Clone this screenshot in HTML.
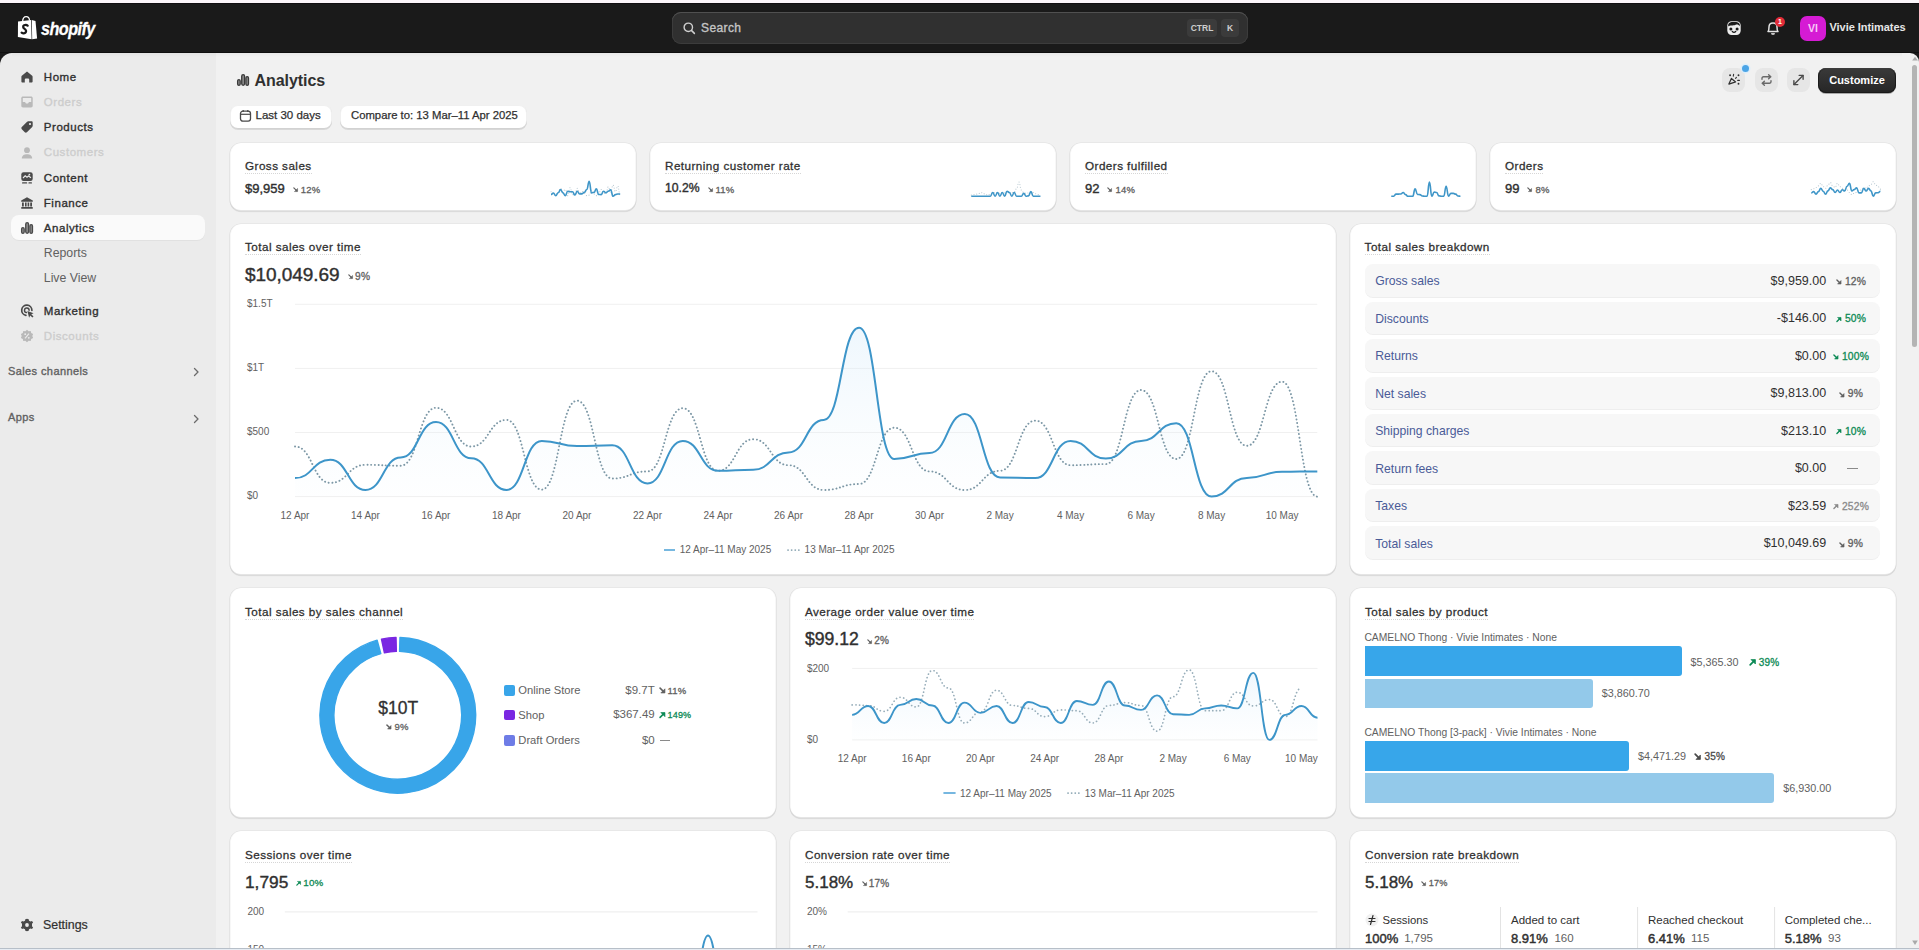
<!DOCTYPE html>
<html><head><meta charset="utf-8"><style>
*{box-sizing:border-box;margin:0;padding:0}
html,body{width:1919px;height:950px;overflow:hidden;background:#f1f1f1;font-family:"Liberation Sans",sans-serif;color:#303030}
.abs{position:absolute}
.t{position:absolute;white-space:nowrap}
.card{position:absolute;background:#fff;border-radius:11px;box-shadow:0 0 0 0.6px rgba(0,0,0,.07),0 1px 0 0.3px rgba(0,0,0,.05),inset 0 -1px 0 rgba(0,0,0,.1),inset 1px 0 0 rgba(0,0,0,.03),inset -1px 0 0 rgba(0,0,0,.03)}
.ul{border-bottom:1px dashed #d4d4d4;}
</style></head><body>
<div class="abs" style="left:0px;top:0px;width:1919px;height:3px;background:#fbf6fa;border-radius:0px;"></div>
<div class="abs" style="left:0px;top:3px;width:1919px;height:80px;background:#1a1a1a;border-radius:0px;"></div>
<div class="abs" style="left:0px;top:3px;width:1919px;height:1px;background:#110e11;border-radius:0px;"></div>
<div class="abs" style="left:216px;top:53px;width:1694px;height:897px;background:#f1f1f1;border-radius:0px;"></div>
<div class="abs" style="left:0px;top:53px;width:216px;height:897px;background:#ebebeb;border-radius:0px;border-top-left-radius:12px"></div>
<div class="abs" style="left:0px;top:52px;width:1919px;height:1px;background:#0f0f0f;border-radius:0px;"></div>
<div class="abs" style="left:12px;top:53px;width:1890px;height:4px;background:linear-gradient(rgba(0,0,0,.035),rgba(0,0,0,0));border-radius:0px;"></div>
<div class="abs" style="left:1910px;top:53px;width:9px;height:897px;background:#f1f1f1;border-radius:0px;border-top-right-radius:10px"></div>
<svg class="abs" style="left:17px;top:16px;" width="22" height="24" viewBox="0 0 22 24">
<path d="M1 5.6 L14.1 4 L14.6 23.3 L0.9 21.1 Z" fill="#fff"/>
<path d="M14.8 4.1 L18.5 5 L20.1 22.6 L15.2 23.3 Z" fill="#fff"/>
<path d="M5.6 5.6 C5.8 2.4 7.4 0.7 9.2 0.7 C11 0.7 12.3 2.2 12.6 4.6" stroke="#fff" stroke-width="1.3" fill="none"/>
<path d="M10.7 9.7 C9.9 8.8 8.3 8.6 7.1 9.2 C5.7 9.9 5.9 11.7 7.3 12.6 C8.9 13.6 9.5 14.9 8.7 16.4 C7.9 17.7 5.9 17.7 4.6 16.7" stroke="#1a1a1a" stroke-width="2.2" fill="none" stroke-linecap="round"/>
</svg>
<div class="t " style="top:18.51px;font-size:18px;line-height:21.6px;font-weight:700;color:#fff;left:40.5px;font-style:italic;letter-spacing:-0.6px;transform:scaleX(0.9);transform-origin:left center;-webkit-text-stroke:0.3px #fff;">shopify</div>
<div class="abs" style="left:672px;top:12px;width:576px;height:32px;background:#303030;border-radius:9px;box-shadow:inset 0 1px 0 #505050,inset 0 0 0 1px #3c3c3c"></div>
<svg class="abs" style="left:683px;top:22px;" width="13" height="13" viewBox="0 0 13 13"><circle cx="5.3" cy="5.3" r="4.2" stroke="#cfcfcf" stroke-width="1.4" fill="none"/><path d="M8.4 8.4 L11.4 11.4" stroke="#cfcfcf" stroke-width="1.5" stroke-linecap="round"/></svg>
<div class="t " style="top:21.24px;font-size:12px;line-height:14.4px;font-weight:400;color:#c4c4c4;-webkit-text-stroke:0.35px #c4c4c4;letter-spacing:0.4px;left:701px;">Search</div>
<div class="abs" style="left:1187px;top:19px;width:30px;height:18px;background:#3b3b3b;border-radius:4px;"></div>
<div class="t " style="top:23.00px;font-size:8.5px;line-height:10.2px;font-weight:700;color:#cdcdcd;left:1202px;transform:translateX(-50%);">CTRL</div>
<div class="abs" style="left:1221px;top:19px;width:18px;height:18px;background:#3b3b3b;border-radius:4px;"></div>
<div class="t " style="top:23.00px;font-size:8.5px;line-height:10.2px;font-weight:700;color:#cdcdcd;left:1230px;transform:translateX(-50%);">K</div>
<svg class="abs" style="left:1727px;top:21px;" width="14" height="14" viewBox="0 0 14 14"><rect x="0.3" y="0.3" width="13.4" height="13.6" rx="4.2" fill="#ededed"/>
<path d="M1.2 5.6 C3 3.6 6 4.8 8.2 3.9 C10 3.2 11.6 3.6 12.8 5.2 V3.6 C12 1.6 10.6 1 7 1 C3.4 1 2 1.6 1.2 3.6 Z" fill="#1a1a1a"/>
<circle cx="3.9" cy="7.9" r="1.5" fill="#1a1a1a"/><circle cx="10.1" cy="7.9" r="1.5" fill="#1a1a1a"/>
<path d="M5.3 10.5 Q7 12.2 8.7 10.5" stroke="#1a1a1a" stroke-width="1.3" fill="none" stroke-linecap="round"/></svg>
<svg class="abs" style="left:1765px;top:20px;" width="16" height="16" viewBox="0 0 16 16"><path d="M3 11.5 C4 10.5 4 9 4 7 C4 4.5 5.5 3 8 3 C10.5 3 12 4.5 12 7 C12 9 12 10.5 13 11.5 Z" stroke="#e3e3e3" stroke-width="1.5" fill="none" stroke-linejoin="round"/>
<path d="M6.5 13.2 Q8 15 9.5 13.2" stroke="#e3e3e3" stroke-width="1.5" fill="none"/></svg>
<div class="abs" style="left:1775px;top:17px;width:10px;height:10px;border-radius:5px;background:#e22c38"></div>
<div class="t " style="top:17.88px;font-size:7px;line-height:8.4px;font-weight:700;color:#fff;left:1780px;transform:translateX(-50%);">1</div>
<div class="abs" style="left:1800px;top:16px;width:26px;height:25px;background:#d51bd4;border-radius:7px;"></div>
<div class="t " style="top:21.82px;font-size:10.5px;line-height:12.6px;font-weight:700;color:#f7c9f7;left:1813px;transform:translateX(-50%);">VI</div>
<div class="t " style="top:20.73px;font-size:11px;line-height:13.2px;font-weight:700;color:#e6e6e6;left:1829.5px;letter-spacing:-0.05px">Vivie Intimates</div>
<div class="abs" style="left:11px;top:215px;width:194px;height:25px;background:#fafafa;border-radius:8px;box-shadow:0 1px 0 rgba(0,0,0,.04)"></div>
<div class="t " style="top:70.83px;font-size:11.5px;line-height:13.8px;font-weight:400;color:#303030;-webkit-text-stroke:0.35px #303030;letter-spacing:0.4px;left:43.8px;letter-spacing:0.55px;-webkit-text-stroke:0.35px #303030;">Home</div>
<svg class="abs" style="left:20px;top:70px;" width="14" height="14" viewBox="0 0 14 14"><path d="M7 1.6 L12.2 5.8 C12.5 6.1 12.6 6.4 12.6 6.8 V11.4 C12.6 12 12.1 12.5 11.5 12.5 H9.2 V9.6 C9.2 8.9 8.6 8.4 7.9 8.4 H6.1 C5.4 8.4 4.8 8.9 4.8 9.6 V12.5 H2.5 C1.9 12.5 1.4 12 1.4 11.4 V6.8 C1.4 6.4 1.5 6.1 1.8 5.8 Z" fill="#4a4a4a"/></svg>
<div class="t " style="top:96.13px;font-size:11.5px;line-height:13.8px;font-weight:400;color:#cdcdcd;-webkit-text-stroke:0.35px #cdcdcd;letter-spacing:0.4px;left:43.8px;letter-spacing:0.55px;-webkit-text-stroke:0.35px #cdcdcd;">Orders</div>
<svg class="abs" style="left:20px;top:95.3px;" width="14" height="14" viewBox="0 0 14 14"><path d="M3 1.5 H11 C12 1.5 12.7 2.2 12.7 3.2 V10.8 C12.7 11.8 12 12.5 11 12.5 H3 C2 12.5 1.3 11.8 1.3 10.8 V3.2 C1.3 2.2 2 1.5 3 1.5 Z" fill="#b9b9b9"/><path d="M2.8 3 H11.2 V7 H9 L8 8.5 H6 L5 7 H2.8 Z" fill="#ebebeb"/></svg>
<div class="t " style="top:121.03px;font-size:11.5px;line-height:13.8px;font-weight:400;color:#303030;-webkit-text-stroke:0.35px #303030;letter-spacing:0.4px;left:43.8px;letter-spacing:0.55px;-webkit-text-stroke:0.35px #303030;">Products</div>
<svg class="abs" style="left:20px;top:120.2px;" width="14" height="14" viewBox="0 0 14 14"><path d="M8.2 1.3 H11.6 C12.2 1.3 12.7 1.8 12.7 2.4 V5.8 C12.7 6.2 12.5 6.6 12.2 6.9 L6.9 12.2 C6.3 12.8 5.4 12.8 4.8 12.2 L1.8 9.2 C1.2 8.6 1.2 7.7 1.8 7.1 L7.1 1.8 C7.4 1.5 7.8 1.3 8.2 1.3 Z" fill="#4a4a4a"/><circle cx="10" cy="4" r="1.1" fill="#ebebeb"/></svg>
<div class="t " style="top:146.33px;font-size:11.5px;line-height:13.8px;font-weight:400;color:#cdcdcd;-webkit-text-stroke:0.35px #cdcdcd;letter-spacing:0.4px;left:43.8px;letter-spacing:0.55px;-webkit-text-stroke:0.35px #cdcdcd;">Customers</div>
<svg class="abs" style="left:20px;top:145.5px;" width="14" height="14" viewBox="0 0 14 14"><circle cx="7" cy="4.2" r="2.9" fill="#b9b9b9"/><path d="M1.8 12.6 C1.8 9.6 4 8.2 7 8.2 C10 8.2 12.2 9.6 12.2 12.6 Z" fill="#b9b9b9"/></svg>
<div class="t " style="top:171.83px;font-size:11.5px;line-height:13.8px;font-weight:400;color:#303030;-webkit-text-stroke:0.35px #303030;letter-spacing:0.4px;left:43.8px;letter-spacing:0.55px;-webkit-text-stroke:0.35px #303030;">Content</div>
<svg class="abs" style="left:20px;top:171px;" width="14" height="14" viewBox="0 0 14 14"><rect x="1.3" y="1.3" width="11.4" height="8.6" rx="2.2" fill="#4a4a4a"/><path d="M3 7 L5.2 4.8 L7 6.2 L8.5 5 L11 6.8" stroke="#ebebeb" stroke-width="1.1" fill="none"/><circle cx="9.4" cy="3.6" r="0.9" fill="#ebebeb"/><rect x="2" y="11.3" width="5.2" height="1.3" rx=".6" fill="#4a4a4a"/><rect x="8.4" y="11.3" width="3.6" height="1.3" rx=".6" fill="#4a4a4a"/></svg>
<div class="t " style="top:196.83px;font-size:11.5px;line-height:13.8px;font-weight:400;color:#303030;-webkit-text-stroke:0.35px #303030;letter-spacing:0.4px;left:43.8px;letter-spacing:0.55px;-webkit-text-stroke:0.35px #303030;">Finance</div>
<svg class="abs" style="left:20px;top:196px;" width="14" height="14" viewBox="0 0 14 14"><path d="M7 1.3 L12.8 4.6 V5.8 H1.2 V4.6 Z" fill="#4a4a4a"/><rect x="2" y="6.5" width="1.8" height="4" fill="#4a4a4a"/><rect x="5" y="6.5" width="1.6" height="4" fill="#4a4a4a"/><rect x="7.6" y="6.5" width="1.6" height="4" fill="#4a4a4a"/><rect x="10.2" y="6.5" width="1.8" height="4" fill="#4a4a4a"/><rect x="1.2" y="11" width="11.6" height="1.8" rx=".5" fill="#4a4a4a"/></svg>
<div class="t " style="top:222.03px;font-size:11.5px;line-height:13.8px;font-weight:400;color:#303030;-webkit-text-stroke:0.35px #303030;letter-spacing:0.4px;left:43.8px;letter-spacing:0.55px;-webkit-text-stroke:0.35px #303030;">Analytics</div>
<svg class="abs" style="left:20px;top:221.2px;" width="14" height="14" viewBox="0 0 14 14"><rect x="1.6" y="6.7" width="2.6" height="5.6" rx="1.3" fill="#8a8a8a" stroke="#4a4a4a" stroke-width="1.25"/><rect x="5.7" y="1.7" width="2.9" height="10.6" rx="1.45" fill="#8a8a8a" stroke="#4a4a4a" stroke-width="1.25"/><rect x="9.9" y="3.6" width="2.6" height="8.7" rx="1.3" fill="#8a8a8a" stroke="#4a4a4a" stroke-width="1.25"/></svg>
<div class="t " style="top:246.36px;font-size:12.3px;line-height:14.76px;font-weight:400;color:#616161;left:43.8px;">Reports</div>
<div class="t " style="top:271.36px;font-size:12.3px;line-height:14.76px;font-weight:400;color:#616161;left:43.8px;">Live View</div>
<div class="t " style="top:304.93px;font-size:11.5px;line-height:13.8px;font-weight:400;color:#303030;-webkit-text-stroke:0.35px #303030;letter-spacing:0.4px;left:43.8px;letter-spacing:0.55px;-webkit-text-stroke:0.35px #303030;">Marketing</div>
<svg class="abs" style="left:20px;top:304.1px;" width="14" height="14" viewBox="0 0 14 14"><path d="M5.91 11.32 A5.1 5.1 0 1 1 11.90 6.30" stroke="#4a4a4a" stroke-width="1.7" fill="none" stroke-linecap="round"/><path d="M6.40 8.57 A2.3 2.3 0 1 1 9.10 6.30" stroke="#4a4a4a" stroke-width="1.5" fill="none" stroke-linecap="round"/><path d="M7.4 7 L13.6 9.2 L11.3 10.3 L13.5 12.5 L12.4 13.6 L10.2 11.4 L9.1 13.7 Z" fill="#4a4a4a"/></svg>
<div class="t " style="top:330.23px;font-size:11.5px;line-height:13.8px;font-weight:400;color:#cdcdcd;-webkit-text-stroke:0.35px #cdcdcd;letter-spacing:0.4px;left:43.8px;letter-spacing:0.55px;-webkit-text-stroke:0.35px #cdcdcd;">Discounts</div>
<svg class="abs" style="left:20px;top:329.4px;" width="14" height="14" viewBox="0 0 14 14"><path d="M7 0.8 L8.6 2.2 L10.7 1.9 L11.2 4 L13.1 5 L12.3 7 L13.1 9 L11.2 10 L10.7 12.1 L8.6 11.8 L7 13.2 L5.4 11.8 L3.3 12.1 L2.8 10 L0.9 9 L1.7 7 L0.9 5 L2.8 4 L3.3 1.9 L5.4 2.2 Z" fill="#b9b9b9"/><path d="M5 9.3 L9 4.7" stroke="#ebebeb" stroke-width="1.1"/><circle cx="5.2" cy="5.2" r=".9" fill="#ebebeb"/><circle cx="8.8" cy="8.8" r=".9" fill="#ebebeb"/></svg>
<div class="t " style="top:364.83px;font-size:11px;line-height:13.2px;font-weight:400;color:#616161;-webkit-text-stroke:0.35px #616161;letter-spacing:0.4px;left:8px;">Sales channels</div>
<div class="t " style="top:411.13px;font-size:11px;line-height:13.2px;font-weight:400;color:#616161;-webkit-text-stroke:0.35px #616161;letter-spacing:0.4px;left:8px;">Apps</div>
<svg class="abs" style="left:192px;top:367.3px;" width="8" height="10" viewBox="0 0 8 10"><path d="M2.5 1.5 L6 5 L2.5 8.5" stroke="#6b6b6b" stroke-width="1.3" fill="none" stroke-linecap="round" stroke-linejoin="round"/></svg>
<svg class="abs" style="left:192px;top:414.1px;" width="8" height="10" viewBox="0 0 8 10"><path d="M2.5 1.5 L6 5 L2.5 8.5" stroke="#6b6b6b" stroke-width="1.3" fill="none" stroke-linecap="round" stroke-linejoin="round"/></svg>
<svg class="abs" style="left:20px;top:917.5px;" width="14" height="14" viewBox="0 0 14 14"><path d="M7 0.7 L8.7 1.2 L9 2.8 L10.5 3.5 L12 2.9 L13.1 4.5 L12 5.7 V8.3 L13.1 9.5 L12 11.1 L10.5 10.5 L9 11.2 L8.7 12.8 L7 13.3 L5.3 12.8 L5 11.2 L3.5 10.5 L2 11.1 L0.9 9.5 L2 8.3 V5.7 L0.9 4.5 L2 2.9 L3.5 3.5 L5 2.8 L5.3 1.2 Z" fill="#4a4a4a"/><circle cx="7" cy="7" r="1.9" fill="#ebebeb"/></svg>
<div class="t " style="top:917.70px;font-size:12.4px;line-height:14.88px;font-weight:400;color:#303030;left:43px;-webkit-text-stroke:0.2px #303030">Settings</div>
<svg class="abs" style="left:236px;top:73px;" width="14" height="14" viewBox="0 0 14 14"><rect x="1.6" y="6.7" width="2.6" height="5.6" rx="1.3" fill="#8a8a8a" stroke="#3a3a3a" stroke-width="1.25"/><rect x="5.7" y="1.7" width="2.9" height="10.6" rx="1.45" fill="#8a8a8a" stroke="#3a3a3a" stroke-width="1.25"/><rect x="9.9" y="3.6" width="2.6" height="8.7" rx="1.3" fill="#8a8a8a" stroke="#3a3a3a" stroke-width="1.25"/></svg>
<div class="t " style="top:70.58px;font-size:16px;line-height:19.2px;font-weight:700;color:#303030;left:254.5px;letter-spacing:-0.05px">Analytics</div>
<div class="abs" style="left:230px;top:105px;width:102px;height:23.5px;background:#fff;border-radius:8px;box-shadow:0 1px 0 rgba(0,0,0,.1),inset 0 -1px 0 rgba(0,0,0,.12),inset 0 0 0 1px rgba(0,0,0,.06)"></div>
<svg class="abs" style="left:239px;top:109px;" width="13" height="14" viewBox="0 0 13 14"><rect x="1.5" y="2.2" width="10" height="10" rx="2.4" stroke="#4a4a4a" stroke-width="1.3" fill="none"/><path d="M1.8 5.3 H11.2" stroke="#4a4a4a" stroke-width="1.2"/><path d="M4.2 1 V3 M8.8 1 V3" stroke="#4a4a4a" stroke-width="1.2"/></svg>
<div class="t " style="top:108.73px;font-size:11.5px;line-height:13.8px;font-weight:400;color:#303030;left:255.5px;letter-spacing:0px;-webkit-text-stroke:0.25px #303030">Last 30 days</div>
<div class="abs" style="left:340px;top:105px;width:187px;height:23.5px;background:#fff;border-radius:8px;box-shadow:0 1px 0 rgba(0,0,0,.1),inset 0 -1px 0 rgba(0,0,0,.12),inset 0 0 0 1px rgba(0,0,0,.06)"></div>
<div class="t " style="top:108.85px;font-size:11.3px;line-height:13.56px;font-weight:400;color:#303030;left:351px;-webkit-text-stroke:0.25px #303030">Compare to: 13 Mar–11 Apr 2025</div>
<div class="abs" style="left:1722px;top:68px;width:23px;height:23.5px;background:#e6e6e6;border-radius:8px;"></div>
<div class="abs" style="left:1755px;top:68px;width:23px;height:23.5px;background:#e6e6e6;border-radius:8px;"></div>
<div class="abs" style="left:1787px;top:68px;width:23px;height:23.5px;background:#e6e6e6;border-radius:8px;"></div>
<svg class="abs" style="left:1727px;top:73px;" width="14" height="14" viewBox="0 0 14 14"><path d="M1.9 11.1 L4.4 5.4 L8.6 8.9 Z" stroke="#303030" stroke-width="1.25" fill="none" stroke-linejoin="round"/>
<circle cx="3.1" cy="2.3" r="0.95" fill="#303030"/><circle cx="11.5" cy="2.3" r="0.95" fill="#303030"/><circle cx="11.5" cy="10.7" r="0.95" fill="#303030"/>
<path d="M6.6 1.3 L6.3 3.1 M9.4 4.4 L8.6 5.4 M10.7 7.4 H12.4" stroke="#303030" stroke-width="1.1" stroke-linecap="round"/></svg>
<div class="abs" style="left:1742px;top:65px;width:7px;height:7px;border-radius:4px;background:#4ba4e6;box-shadow:0 0 0 1.5px #dceefb"></div>
<svg class="abs" style="left:1759px;top:73px;" width="15" height="14" viewBox="0 0 15 14"><path d="M3 6.2 V5.2 C3 4.4 3.6 3.8 4.4 3.8 H11.5 M9.6 1.8 L11.8 3.8 L9.6 5.8" stroke="#6a6a6a" stroke-width="1.4" fill="none" stroke-linecap="round" stroke-linejoin="round"/>
<path d="M12 7.8 V8.8 C12 9.6 11.4 10.2 10.6 10.2 H3.5 M5.4 8.2 L3.2 10.2 L5.4 12.2" stroke="#6a6a6a" stroke-width="1.4" fill="none" stroke-linecap="round" stroke-linejoin="round"/></svg>
<svg class="abs" style="left:1791px;top:73px;" width="15" height="14" viewBox="0 0 15 14"><path d="M3 11.5 L12 2.5" stroke="#4a4a4a" stroke-width="1.4" stroke-linecap="round"/>
<path d="M8.2 2.4 H12.1 V6.3 M2.9 7.7 V11.6 H6.8" stroke="#4a4a4a" stroke-width="1.4" fill="none" stroke-linecap="round" stroke-linejoin="round"/></svg>
<div class="abs" style="left:1818px;top:68px;width:78px;height:24.5px;background:linear-gradient(#3a3a3a,#262626);border-radius:8px;box-shadow:0 1px 0 rgba(0,0,0,.3),inset 0 1px 0 rgba(255,255,255,.15),inset 0 0 0 1px #1a1a1a"></div>
<div class="t " style="top:73.53px;font-size:11px;line-height:13.2px;font-weight:700;color:#fff;left:1857px;transform:translateX(-50%);">Customize</div>
<div class="card" style="left:230px;top:143px;width:406px;height:67.5px"></div>
<div class="t " style="top:158.81px;font-size:11.7px;line-height:14.04px;font-weight:400;color:#303030;-webkit-text-stroke:0.35px #303030;letter-spacing:0.4px;left:245px;border-bottom:1px dotted #d6d6d6;letter-spacing:0.45px;-webkit-text-stroke:0.28px #303030;">Gross sales</div>
<div class="abs" style="left:245px;top:178.6px;height:20px;display:flex;align-items:center;white-space:nowrap"><span style="display:inline-flex;align-items:center;line-height:1;font-size:13px;font-weight:400;color:#303030;-webkit-text-stroke:0.4px #303030;margin-right:8px;">$9,959</span><span style="display:inline-flex;align-items:center;line-height:1;margin-right:3px;position:relative;top:1px;"><svg width="5" height="5" viewBox="0 0 6 6" style="display:block;overflow:visible"><path d="M1 1 L4.6 4.6" stroke="#616161" stroke-width="1.5" fill="none" stroke-linecap="round"/><path d="M5.5 1.7 V5.5 H1.7 Z" fill="#616161" stroke="#616161" stroke-width="0.6" stroke-linejoin="round"/></svg></span><span style="display:inline-flex;align-items:center;line-height:1;font-size:9.5px;font-weight:400;color:#616161;-webkit-text-stroke:0.3px #616161;letter-spacing:0.2px;position:relative;top:1px;">12%</span></div>
<div class="card" style="left:650px;top:143px;width:406px;height:67.5px"></div>
<div class="t " style="top:158.81px;font-size:11.7px;line-height:14.04px;font-weight:400;color:#303030;-webkit-text-stroke:0.35px #303030;letter-spacing:0.4px;left:665px;border-bottom:1px dotted #d6d6d6;letter-spacing:0.45px;-webkit-text-stroke:0.28px #303030;">Returning customer rate</div>
<div class="abs" style="left:665px;top:178.6px;height:20px;display:flex;align-items:center;white-space:nowrap"><span style="display:inline-flex;align-items:center;line-height:1;font-size:12.2px;font-weight:400;color:#303030;-webkit-text-stroke:0.4px #303030;margin-right:8px;">10.2%</span><span style="display:inline-flex;align-items:center;line-height:1;margin-right:3px;position:relative;top:1px;"><svg width="5" height="5" viewBox="0 0 6 6" style="display:block;overflow:visible"><path d="M1 1 L4.6 4.6" stroke="#616161" stroke-width="1.5" fill="none" stroke-linecap="round"/><path d="M5.5 1.7 V5.5 H1.7 Z" fill="#616161" stroke="#616161" stroke-width="0.6" stroke-linejoin="round"/></svg></span><span style="display:inline-flex;align-items:center;line-height:1;font-size:9.5px;font-weight:400;color:#616161;-webkit-text-stroke:0.3px #616161;letter-spacing:0.2px;position:relative;top:1px;">11%</span></div>
<div class="card" style="left:1070px;top:143px;width:406px;height:67.5px"></div>
<div class="t " style="top:158.81px;font-size:11.7px;line-height:14.04px;font-weight:400;color:#303030;-webkit-text-stroke:0.35px #303030;letter-spacing:0.4px;left:1085px;border-bottom:1px dotted #d6d6d6;letter-spacing:0.45px;-webkit-text-stroke:0.28px #303030;">Orders fulfilled</div>
<div class="abs" style="left:1085px;top:178.6px;height:20px;display:flex;align-items:center;white-space:nowrap"><span style="display:inline-flex;align-items:center;line-height:1;font-size:13px;font-weight:400;color:#303030;-webkit-text-stroke:0.4px #303030;margin-right:8px;">92</span><span style="display:inline-flex;align-items:center;line-height:1;margin-right:3px;position:relative;top:1px;"><svg width="5" height="5" viewBox="0 0 6 6" style="display:block;overflow:visible"><path d="M1 1 L4.6 4.6" stroke="#616161" stroke-width="1.5" fill="none" stroke-linecap="round"/><path d="M5.5 1.7 V5.5 H1.7 Z" fill="#616161" stroke="#616161" stroke-width="0.6" stroke-linejoin="round"/></svg></span><span style="display:inline-flex;align-items:center;line-height:1;font-size:9.5px;font-weight:400;color:#616161;-webkit-text-stroke:0.3px #616161;letter-spacing:0.2px;position:relative;top:1px;">14%</span></div>
<div class="card" style="left:1490px;top:143px;width:406px;height:67.5px"></div>
<div class="t " style="top:158.81px;font-size:11.7px;line-height:14.04px;font-weight:400;color:#303030;-webkit-text-stroke:0.35px #303030;letter-spacing:0.4px;left:1505px;border-bottom:1px dotted #d6d6d6;letter-spacing:0.45px;-webkit-text-stroke:0.28px #303030;">Orders</div>
<div class="abs" style="left:1505px;top:178.6px;height:20px;display:flex;align-items:center;white-space:nowrap"><span style="display:inline-flex;align-items:center;line-height:1;font-size:13px;font-weight:400;color:#303030;-webkit-text-stroke:0.4px #303030;margin-right:8px;">99</span><span style="display:inline-flex;align-items:center;line-height:1;margin-right:3px;position:relative;top:1px;"><svg width="5" height="5" viewBox="0 0 6 6" style="display:block;overflow:visible"><path d="M1 1 L4.6 4.6" stroke="#616161" stroke-width="1.5" fill="none" stroke-linecap="round"/><path d="M5.5 1.7 V5.5 H1.7 Z" fill="#616161" stroke="#616161" stroke-width="0.6" stroke-linejoin="round"/></svg></span><span style="display:inline-flex;align-items:center;line-height:1;font-size:9.5px;font-weight:400;color:#616161;-webkit-text-stroke:0.3px #616161;letter-spacing:0.2px;position:relative;top:1px;">8%</span></div>
<div class="card" style="left:230px;top:224px;width:1106px;height:350.5px"></div>
<div class="t " style="top:239.61px;font-size:11.7px;line-height:14.04px;font-weight:400;color:#303030;-webkit-text-stroke:0.35px #303030;letter-spacing:0.4px;left:245px;border-bottom:1px dotted #d6d6d6;letter-spacing:0.45px;-webkit-text-stroke:0.28px #303030;">Total sales over time</div>
<div class="abs" style="left:245px;top:264.4px;height:20px;display:flex;align-items:center;white-space:nowrap"><span style="display:inline-flex;align-items:center;line-height:1;font-size:19px;font-weight:400;color:#303030;-webkit-text-stroke:0.4px #303030;margin-right:8px;letter-spacing:-0.05px">$10,049.69</span><span style="display:inline-flex;align-items:center;line-height:1;margin-right:2.5px;position:relative;top:2.5px;"><svg width="5" height="5" viewBox="0 0 6 6" style="display:block;overflow:visible"><path d="M1 1 L4.6 4.6" stroke="#616161" stroke-width="1.5" fill="none" stroke-linecap="round"/><path d="M5.5 1.7 V5.5 H1.7 Z" fill="#616161" stroke="#616161" stroke-width="0.6" stroke-linejoin="round"/></svg></span><span style="display:inline-flex;align-items:center;line-height:1;font-size:10.2px;font-weight:400;color:#616161;-webkit-text-stroke:0.3px #616161;letter-spacing:0.2px;position:relative;top:2.5px;">9%</span></div>
<svg class="abs" style="left:0;top:0" width="1919" height="950"><path d="M551.00 191.79 C552.19 191.79 552.19 195.03 553.39 195.03 C554.58 195.03 554.58 193.42 555.77 193.42 C556.97 193.42 556.97 193.50 558.16 193.50 C559.35 193.50 559.35 188.36 560.54 188.36 C561.74 188.36 561.74 191.79 562.93 191.79 C564.12 191.79 564.12 189.43 565.32 189.43 C566.51 189.43 566.51 195.62 567.70 195.62 C568.90 195.62 568.90 187.73 570.09 187.73 C571.28 187.73 571.28 194.63 572.48 194.63 C573.67 194.63 573.67 194.00 574.86 194.00 C576.06 194.00 576.06 188.39 577.25 188.39 C578.44 188.39 578.44 193.95 579.63 193.95 C580.83 193.95 580.83 191.15 582.02 191.15 C583.21 191.15 583.21 193.45 584.41 193.45 C585.60 193.45 585.60 195.66 586.79 195.66 C587.99 195.66 587.99 195.12 589.18 195.12 C590.37 195.12 590.37 190.13 591.57 190.13 C592.76 190.13 592.76 194.00 593.95 194.00 C595.14 194.00 595.14 195.66 596.34 195.66 C597.53 195.66 597.53 193.95 598.72 193.95 C599.92 193.95 599.92 189.50 601.11 189.50 C602.30 189.50 602.30 193.45 603.50 193.45 C604.69 193.45 604.69 193.36 605.88 193.36 C607.08 193.36 607.08 186.78 608.27 186.78 C609.46 186.78 609.46 192.90 610.66 192.90 C611.85 192.90 611.85 185.12 613.04 185.12 C614.23 185.12 614.23 191.73 615.43 191.73 C616.62 191.73 616.62 186.04 617.81 186.04 C619.01 186.04 619.01 196.24 620.20 196.24" stroke="#b9c9d2" stroke-width="1.1" stroke-dasharray="0.1 2.6" stroke-linecap="round" fill="none"/><path d="M551.00 194.60 C552.19 194.60 552.19 192.97 553.39 192.97 C554.58 192.97 554.58 195.66 555.77 195.66 C556.97 195.66 556.97 192.77 558.16 192.77 C559.35 192.77 559.35 189.63 560.54 189.63 C561.74 189.63 561.74 192.83 562.93 192.83 C564.12 192.83 564.12 195.66 565.32 195.66 C566.51 195.66 566.51 191.30 567.70 191.30 C568.90 191.30 568.90 191.75 570.09 191.75 C571.28 191.75 571.28 191.69 572.48 191.69 C573.67 191.69 573.67 195.07 574.86 195.07 C576.06 195.07 576.06 191.30 577.25 191.30 C578.44 191.30 578.44 193.95 579.63 193.95 C580.83 193.95 580.83 193.85 582.02 193.85 C583.21 193.85 583.21 192.32 584.41 192.32 C585.60 192.32 585.60 189.43 586.79 189.43 C587.99 189.43 587.99 181.25 589.18 181.25 C590.37 181.25 590.37 192.90 591.57 192.90 C592.76 192.90 592.76 192.38 593.95 192.38 C595.14 192.38 595.14 188.91 596.34 188.91 C597.53 188.91 597.53 194.54 598.72 194.54 C599.92 194.54 599.92 194.60 601.11 194.60 C602.30 194.60 602.30 191.30 603.50 191.30 C604.69 191.30 604.69 192.87 605.88 192.87 C607.08 192.87 607.08 191.30 608.27 191.30 C609.46 191.30 609.46 189.73 610.66 189.73 C611.85 189.73 611.85 196.24 613.04 196.24 C614.23 196.24 614.23 194.59 615.43 194.59 C616.62 194.59 616.62 194.04 617.81 194.04 C619.01 194.04 619.01 194.00 620.20 194.00" stroke="#3f96c8" stroke-width="1.6" fill="none" stroke-linejoin="round"/></svg>
<svg class="abs" style="left:0;top:0" width="1919" height="950"><path d="M971.25 195.00 C972.44 195.00 972.44 194.58 973.64 194.58 C974.83 194.58 974.83 194.17 976.02 194.17 C977.22 194.17 977.22 193.75 978.41 193.75 C979.60 193.75 979.60 192.50 980.79 192.50 C981.99 192.50 981.99 193.33 983.18 193.33 C984.37 193.33 984.37 194.58 985.57 194.58 C986.76 194.58 986.76 195.00 987.95 195.00 C989.15 195.00 989.15 194.17 990.34 194.17 C991.53 194.17 991.53 193.33 992.73 193.33 C993.92 193.33 993.92 192.50 995.11 192.50 C996.31 192.50 996.31 192.92 997.50 192.92 C998.69 192.92 998.69 193.33 999.88 193.33 C1001.08 193.33 1001.08 192.50 1002.27 192.50 C1003.46 192.50 1003.46 192.92 1004.66 192.92 C1005.85 192.92 1005.85 191.67 1007.04 191.67 C1008.24 191.67 1008.24 192.92 1009.43 192.92 C1010.62 192.92 1010.62 192.50 1011.82 192.50 C1013.01 192.50 1013.01 192.08 1014.20 192.08 C1015.39 192.08 1015.39 188.75 1016.59 188.75 C1017.78 188.75 1017.78 182.08 1018.97 182.08 C1020.17 182.08 1020.17 190.00 1021.36 190.00 C1022.55 190.00 1022.55 192.50 1023.75 192.50 C1024.94 192.50 1024.94 193.33 1026.13 193.33 C1027.33 193.33 1027.33 192.92 1028.52 192.92 C1029.71 192.92 1029.71 192.08 1030.91 192.08 C1032.10 192.08 1032.10 192.50 1033.29 192.50 C1034.48 192.50 1034.48 193.75 1035.68 193.75 C1036.87 193.75 1036.87 194.58 1038.06 194.58 C1039.26 194.58 1039.26 195.00 1040.45 195.00" stroke="#b9c9d2" stroke-width="1.1" stroke-dasharray="0.1 2.6" stroke-linecap="round" fill="none"/><path d="M971.25 196.25 C972.44 196.25 972.44 196.25 973.64 196.25 C974.83 196.25 974.83 196.25 976.02 196.25 C977.22 196.25 977.22 196.25 978.41 196.25 C979.60 196.25 979.60 196.25 980.79 196.25 C981.99 196.25 981.99 196.25 983.18 196.25 C984.37 196.25 984.37 196.25 985.57 196.25 C986.76 196.25 986.76 196.25 987.95 196.25 C989.15 196.25 989.15 196.25 990.34 196.25 C991.53 196.25 991.53 192.50 992.73 192.50 C993.92 192.50 993.92 196.25 995.11 196.25 C996.31 196.25 996.31 192.50 997.50 192.50 C998.69 192.50 998.69 196.25 999.88 196.25 C1001.08 196.25 1001.08 192.50 1002.27 192.50 C1003.46 192.50 1003.46 196.25 1004.66 196.25 C1005.85 196.25 1005.85 191.25 1007.04 191.25 C1008.24 191.25 1008.24 192.50 1009.43 192.50 C1010.62 192.50 1010.62 196.25 1011.82 196.25 C1013.01 196.25 1013.01 192.50 1014.20 192.50 C1015.39 192.50 1015.39 196.25 1016.59 196.25 C1017.78 196.25 1017.78 196.25 1018.97 196.25 C1020.17 196.25 1020.17 196.25 1021.36 196.25 C1022.55 196.25 1022.55 193.33 1023.75 193.33 C1024.94 193.33 1024.94 196.25 1026.13 196.25 C1027.33 196.25 1027.33 195.83 1028.52 195.83 C1029.71 195.83 1029.71 191.67 1030.91 191.67 C1032.10 191.67 1032.10 196.25 1033.29 196.25 C1034.48 196.25 1034.48 196.25 1035.68 196.25 C1036.87 196.25 1036.87 196.25 1038.06 196.25 C1039.26 196.25 1039.26 196.25 1040.45 196.25" stroke="#3f96c8" stroke-width="1.6" fill="none" stroke-linejoin="round"/></svg>
<svg class="abs" style="left:0;top:0" width="1919" height="950"><path d="M1391.25 196.25 C1392.44 196.25 1392.44 196.25 1393.64 196.25 C1394.83 196.25 1394.83 194.17 1396.02 194.17 C1397.22 194.17 1397.22 194.17 1398.41 194.17 C1399.60 194.17 1399.60 193.96 1400.79 193.96 C1401.99 193.96 1401.99 192.50 1403.18 192.50 C1404.37 192.50 1404.37 194.58 1405.57 194.58 C1406.76 194.58 1406.76 196.25 1407.95 196.25 C1409.15 196.25 1409.15 196.25 1410.34 196.25 C1411.53 196.25 1411.53 196.25 1412.73 196.25 C1413.92 196.25 1413.92 188.75 1415.11 188.75 C1416.31 188.75 1416.31 194.38 1417.50 194.38 C1418.69 194.38 1418.69 194.58 1419.88 194.58 C1421.08 194.58 1421.08 196.04 1422.27 196.04 C1423.46 196.04 1423.46 196.25 1424.66 196.25 C1425.85 196.25 1425.85 196.25 1427.04 196.25 C1428.24 196.25 1428.24 182.08 1429.43 182.08 C1430.62 182.08 1430.62 196.25 1431.82 196.25 C1433.01 196.25 1433.01 192.08 1434.20 192.08 C1435.39 192.08 1435.39 192.50 1436.59 192.50 C1437.78 192.50 1437.78 195.83 1438.97 195.83 C1440.17 195.83 1440.17 196.25 1441.36 196.25 C1442.55 196.25 1442.55 196.25 1443.75 196.25 C1444.94 196.25 1444.94 186.25 1446.13 186.25 C1447.33 186.25 1447.33 196.25 1448.52 196.25 C1449.71 196.25 1449.71 193.33 1450.91 193.33 C1452.10 193.33 1452.10 193.33 1453.29 193.33 C1454.48 193.33 1454.48 194.17 1455.68 194.17 C1456.87 194.17 1456.87 196.04 1458.06 196.04 C1459.26 196.04 1459.26 196.25 1460.45 196.25" stroke="#3f96c8" stroke-width="1.6" fill="none" stroke-linejoin="round"/></svg>
<svg class="abs" style="left:0;top:0" width="1919" height="950"><path d="M1811.25 189.58 C1812.44 189.58 1812.44 188.75 1813.64 188.75 C1814.83 188.75 1814.83 187.50 1816.02 187.50 C1817.22 187.50 1817.22 185.83 1818.41 185.83 C1819.60 185.83 1819.60 183.33 1820.79 183.33 C1821.99 183.33 1821.99 186.67 1823.18 186.67 C1824.37 186.67 1824.37 188.33 1825.57 188.33 C1826.76 188.33 1826.76 185.00 1827.95 185.00 C1829.15 185.00 1829.15 182.50 1830.34 182.50 C1831.53 182.50 1831.53 185.83 1832.73 185.83 C1833.92 185.83 1833.92 187.50 1835.11 187.50 C1836.31 187.50 1836.31 183.33 1837.50 183.33 C1838.69 183.33 1838.69 186.67 1839.88 186.67 C1841.08 186.67 1841.08 188.33 1842.27 188.33 C1843.46 188.33 1843.46 189.17 1844.66 189.17 C1845.85 189.17 1845.85 190.00 1847.04 190.00 C1848.24 190.00 1848.24 192.50 1849.43 192.50 C1850.62 192.50 1850.62 194.58 1851.82 194.58 C1853.01 194.58 1853.01 193.33 1854.20 193.33 C1855.39 193.33 1855.39 192.50 1856.59 192.50 C1857.78 192.50 1857.78 190.83 1858.97 190.83 C1860.17 190.83 1860.17 190.00 1861.36 190.00 C1862.55 190.00 1862.55 187.50 1863.75 187.50 C1864.94 187.50 1864.94 188.33 1866.13 188.33 C1867.33 188.33 1867.33 185.83 1868.52 185.83 C1869.71 185.83 1869.71 184.58 1870.91 184.58 C1872.10 184.58 1872.10 181.67 1873.29 181.67 C1874.48 181.67 1874.48 185.00 1875.68 185.00 C1876.87 185.00 1876.87 186.67 1878.06 186.67 C1879.26 186.67 1879.26 189.17 1880.45 189.17" stroke="#b9c9d2" stroke-width="1.1" stroke-dasharray="0.1 2.6" stroke-linecap="round" fill="none"/><path d="M1811.25 192.92 C1812.44 192.92 1812.44 191.67 1813.64 191.67 C1814.83 191.67 1814.83 194.17 1816.02 194.17 C1817.22 194.17 1817.22 191.67 1818.41 191.67 C1819.60 191.67 1819.60 188.33 1820.79 188.33 C1821.99 188.33 1821.99 191.25 1823.18 191.25 C1824.37 191.25 1824.37 194.17 1825.57 194.17 C1826.76 194.17 1826.76 190.83 1827.95 190.83 C1829.15 190.83 1829.15 187.92 1830.34 187.92 C1831.53 187.92 1831.53 189.58 1832.73 189.58 C1833.92 189.58 1833.92 192.50 1835.11 192.50 C1836.31 192.50 1836.31 190.00 1837.50 190.00 C1838.69 190.00 1838.69 192.50 1839.88 192.50 C1841.08 192.50 1841.08 189.79 1842.27 189.79 C1843.46 189.79 1843.46 191.04 1844.66 191.04 C1845.85 191.04 1845.85 186.25 1847.04 186.25 C1848.24 186.25 1848.24 183.33 1849.43 183.33 C1850.62 183.33 1850.62 190.83 1851.82 190.83 C1853.01 190.83 1853.01 189.58 1854.20 189.58 C1855.39 189.58 1855.39 187.92 1856.59 187.92 C1857.78 187.92 1857.78 192.92 1858.97 192.92 C1860.17 192.92 1860.17 192.92 1861.36 192.92 C1862.55 192.92 1862.55 188.33 1863.75 188.33 C1864.94 188.33 1864.94 191.04 1866.13 191.04 C1867.33 191.04 1867.33 188.33 1868.52 188.33 C1869.71 188.33 1869.71 190.83 1870.91 190.83 C1872.10 190.83 1872.10 196.25 1873.29 196.25 C1874.48 196.25 1874.48 192.92 1875.68 192.92 C1876.87 192.92 1876.87 192.71 1878.06 192.71 C1879.26 192.71 1879.26 191.25 1880.45 191.25" stroke="#3f96c8" stroke-width="1.6" fill="none" stroke-linejoin="round"/></svg>
<div class="t " style="top:297.92px;font-size:10px;line-height:12.0px;font-weight:400;color:#616161;left:247px;">$1.5T</div>
<div class="t " style="top:362.01px;font-size:10px;line-height:12.0px;font-weight:400;color:#616161;left:247px;">$1T</div>
<div class="t " style="top:426.12px;font-size:10px;line-height:12.0px;font-weight:400;color:#616161;left:247px;">$500</div>
<div class="t " style="top:490.22px;font-size:10px;line-height:12.0px;font-weight:400;color:#616161;left:247px;">$0</div>
<svg class="abs" style="left:0;top:0;pointer-events:none" width="1919" height="950"><line x1="295" y1="304.3" x2="1317.3" y2="304.3" stroke="#f0f0f0" stroke-width="1"/><line x1="295" y1="368.4" x2="1317.3" y2="368.4" stroke="#f0f0f0" stroke-width="1"/><line x1="295" y1="432.5" x2="1317.3" y2="432.5" stroke="#f0f0f0" stroke-width="1"/><line x1="295" y1="496.6" x2="1317.3" y2="496.6" stroke="#f0f0f0" stroke-width="1"/><defs><linearGradient id="g295304" x1="0" y1="0" x2="0" y2="1"><stop offset="0" stop-color="#d3eafa" stop-opacity=".38"/><stop offset="1" stop-color="#e8f4fc" stop-opacity=".05"/></linearGradient></defs><path d="M295.00 478.10 C312.63 478.10 312.63 459.70 330.25 459.70 C347.88 459.70 347.88 490.00 365.50 490.00 C383.13 490.00 383.13 457.50 400.76 457.50 C418.38 457.50 418.38 422.10 436.01 422.10 C453.63 422.10 453.63 458.20 471.26 458.20 C488.88 458.20 488.88 490.00 506.51 490.00 C524.14 490.00 524.14 440.90 541.76 440.90 C559.39 440.90 559.39 446.00 577.01 446.00 C594.64 446.00 594.64 445.30 612.27 445.30 C629.89 445.30 629.89 483.40 647.52 483.40 C665.14 483.40 665.14 440.90 682.77 440.90 C700.39 440.90 700.39 470.80 718.02 470.80 C735.65 470.80 735.65 469.70 753.27 469.70 C770.90 469.70 770.90 452.40 788.52 452.40 C806.15 452.40 806.15 419.90 823.78 419.90 C841.40 419.90 841.40 327.70 859.03 327.70 C876.65 327.70 876.65 459.00 894.28 459.00 C911.91 459.00 911.91 453.10 929.53 453.10 C947.16 453.10 947.16 414.00 964.78 414.00 C982.41 414.00 982.41 477.40 1000.03 477.40 C1017.66 477.40 1017.66 478.10 1035.29 478.10 C1052.91 478.10 1052.91 440.90 1070.54 440.90 C1088.16 440.90 1088.16 458.60 1105.79 458.60 C1123.42 458.60 1123.42 440.90 1141.04 440.90 C1158.67 440.90 1158.67 423.20 1176.29 423.20 C1193.92 423.20 1193.92 496.60 1211.54 496.60 C1229.17 496.60 1229.17 478.00 1246.80 478.00 C1264.42 478.00 1264.42 471.80 1282.05 471.80 C1299.67 471.80 1299.67 471.40 1317.30 471.40 L1317.3 496.6 L295 496.6 Z" fill="url(#g295304)"/><path d="M295.00 446.50 C312.63 446.50 312.63 482.90 330.25 482.90 C347.88 482.90 347.88 464.80 365.50 464.80 C383.13 464.80 383.13 465.70 400.76 465.70 C418.38 465.70 418.38 407.80 436.01 407.80 C453.63 407.80 453.63 446.50 471.26 446.50 C488.88 446.50 488.88 419.90 506.51 419.90 C524.14 419.90 524.14 489.60 541.76 489.60 C559.39 489.60 559.39 400.70 577.01 400.70 C594.64 400.70 594.64 478.50 612.27 478.50 C629.89 478.50 629.89 471.40 647.52 471.40 C665.14 471.40 665.14 408.20 682.77 408.20 C700.39 408.20 700.39 470.80 718.02 470.80 C735.65 470.80 735.65 439.20 753.27 439.20 C770.90 439.20 770.90 465.20 788.52 465.20 C806.15 465.20 806.15 490.00 823.78 490.00 C841.40 490.00 841.40 484.00 859.03 484.00 C876.65 484.00 876.65 427.70 894.28 427.70 C911.91 427.70 911.91 471.40 929.53 471.40 C947.16 471.40 947.16 490.00 964.78 490.00 C982.41 490.00 982.41 470.80 1000.03 470.80 C1017.66 470.80 1017.66 420.60 1035.29 420.60 C1052.91 420.60 1052.91 465.20 1070.54 465.20 C1088.16 465.20 1088.16 464.10 1105.79 464.10 C1123.42 464.10 1123.42 390.00 1141.04 390.00 C1158.67 390.00 1158.67 459.00 1176.29 459.00 C1193.92 459.00 1193.92 371.30 1211.54 371.30 C1229.17 371.30 1229.17 445.80 1246.80 445.80 C1264.42 445.80 1264.42 381.70 1282.05 381.70 C1299.67 381.70 1299.67 496.60 1317.30 496.60" stroke="#7d98a6" stroke-width="1.9" stroke-dasharray="0.1 3.6" stroke-linecap="round" fill="none"/><path d="M295.00 478.10 C312.63 478.10 312.63 459.70 330.25 459.70 C347.88 459.70 347.88 490.00 365.50 490.00 C383.13 490.00 383.13 457.50 400.76 457.50 C418.38 457.50 418.38 422.10 436.01 422.10 C453.63 422.10 453.63 458.20 471.26 458.20 C488.88 458.20 488.88 490.00 506.51 490.00 C524.14 490.00 524.14 440.90 541.76 440.90 C559.39 440.90 559.39 446.00 577.01 446.00 C594.64 446.00 594.64 445.30 612.27 445.30 C629.89 445.30 629.89 483.40 647.52 483.40 C665.14 483.40 665.14 440.90 682.77 440.90 C700.39 440.90 700.39 470.80 718.02 470.80 C735.65 470.80 735.65 469.70 753.27 469.70 C770.90 469.70 770.90 452.40 788.52 452.40 C806.15 452.40 806.15 419.90 823.78 419.90 C841.40 419.90 841.40 327.70 859.03 327.70 C876.65 327.70 876.65 459.00 894.28 459.00 C911.91 459.00 911.91 453.10 929.53 453.10 C947.16 453.10 947.16 414.00 964.78 414.00 C982.41 414.00 982.41 477.40 1000.03 477.40 C1017.66 477.40 1017.66 478.10 1035.29 478.10 C1052.91 478.10 1052.91 440.90 1070.54 440.90 C1088.16 440.90 1088.16 458.60 1105.79 458.60 C1123.42 458.60 1123.42 440.90 1141.04 440.90 C1158.67 440.90 1158.67 423.20 1176.29 423.20 C1193.92 423.20 1193.92 496.60 1211.54 496.60 C1229.17 496.60 1229.17 478.00 1246.80 478.00 C1264.42 478.00 1264.42 471.80 1282.05 471.80 C1299.67 471.80 1299.67 471.40 1317.30 471.40" stroke="#3d95c9" stroke-width="2.0" fill="none"/></svg>
<div class="t " style="top:509.72px;font-size:10px;line-height:12.0px;font-weight:400;color:#616161;left:295.0px;transform:translateX(-50%);">12 Apr</div>
<div class="t " style="top:509.72px;font-size:10px;line-height:12.0px;font-weight:400;color:#616161;left:365.50344827586207px;transform:translateX(-50%);">14 Apr</div>
<div class="t " style="top:509.72px;font-size:10px;line-height:12.0px;font-weight:400;color:#616161;left:436.00689655172414px;transform:translateX(-50%);">16 Apr</div>
<div class="t " style="top:509.72px;font-size:10px;line-height:12.0px;font-weight:400;color:#616161;left:506.5103448275862px;transform:translateX(-50%);">18 Apr</div>
<div class="t " style="top:509.72px;font-size:10px;line-height:12.0px;font-weight:400;color:#616161;left:577.0137931034483px;transform:translateX(-50%);">20 Apr</div>
<div class="t " style="top:509.72px;font-size:10px;line-height:12.0px;font-weight:400;color:#616161;left:647.5172413793103px;transform:translateX(-50%);">22 Apr</div>
<div class="t " style="top:509.72px;font-size:10px;line-height:12.0px;font-weight:400;color:#616161;left:718.0206896551724px;transform:translateX(-50%);">24 Apr</div>
<div class="t " style="top:509.72px;font-size:10px;line-height:12.0px;font-weight:400;color:#616161;left:788.5241379310344px;transform:translateX(-50%);">26 Apr</div>
<div class="t " style="top:509.72px;font-size:10px;line-height:12.0px;font-weight:400;color:#616161;left:859.0275862068966px;transform:translateX(-50%);">28 Apr</div>
<div class="t " style="top:509.72px;font-size:10px;line-height:12.0px;font-weight:400;color:#616161;left:929.5310344827585px;transform:translateX(-50%);">30 Apr</div>
<div class="t " style="top:509.72px;font-size:10px;line-height:12.0px;font-weight:400;color:#616161;left:1000.0344827586207px;transform:translateX(-50%);">2 May</div>
<div class="t " style="top:509.72px;font-size:10px;line-height:12.0px;font-weight:400;color:#616161;left:1070.5379310344827px;transform:translateX(-50%);">4 May</div>
<div class="t " style="top:509.72px;font-size:10px;line-height:12.0px;font-weight:400;color:#616161;left:1141.0413793103448px;transform:translateX(-50%);">6 May</div>
<div class="t " style="top:509.72px;font-size:10px;line-height:12.0px;font-weight:400;color:#616161;left:1211.5448275862068px;transform:translateX(-50%);">8 May</div>
<div class="t " style="top:509.72px;font-size:10px;line-height:12.0px;font-weight:400;color:#616161;left:1282.0482758620687px;transform:translateX(-50%);">10 May</div>
<svg class="abs" style="left:664px;top:546.5px;" width="11" height="6" viewBox="0 0 11 6"><line x1="0.5" y1="3" x2="10.5" y2="3" stroke="#4aa0d6" stroke-width="1.6" stroke-linecap="round"/></svg>
<div class="t " style="top:544.12px;font-size:10px;line-height:12.0px;font-weight:400;color:#616161;left:679.7px;">12 Apr–11 May 2025</div>
<svg class="abs" style="left:787px;top:546.5px;" width="13" height="6" viewBox="0 0 13 6"><line x1="1" y1="3" x2="12" y2="3" stroke="#8ea8b5" stroke-width="1.75" stroke-dasharray="0.1 3.5" stroke-linecap="round"/></svg>
<div class="t " style="top:544.12px;font-size:10px;line-height:12.0px;font-weight:400;color:#616161;left:804.6px;">13 Mar–11 Apr 2025</div>
<div class="card" style="left:1350px;top:224px;width:546px;height:350.5px"></div>
<div class="t " style="top:239.61px;font-size:11.7px;line-height:14.04px;font-weight:400;color:#303030;-webkit-text-stroke:0.35px #303030;letter-spacing:0.4px;left:1364.6px;border-bottom:1px dotted #d6d6d6;letter-spacing:0.45px;-webkit-text-stroke:0.28px #303030;">Total sales breakdown</div>
<div class="abs" style="left:1364.5px;top:264.3px;width:515.5px;height:33.5px;background:#f7f7f7;border-radius:8px;box-shadow:inset 0 -1px 0 rgba(0,0,0,.035)"></div>
<div class="t " style="top:274.02px;font-size:12.2px;line-height:14.64px;font-weight:400;color:#4a5b97;left:1375.2px;">Gross sales</div>
<div class="t " style="top:273.84px;font-size:12.5px;line-height:15.0px;font-weight:400;color:#303030;right:92.79999999999995px;">$9,959.00</div>
<div class="abs" style="left:1826px;width:50px;top:271.2px;height:20px;display:flex;align-items:center;justify-content:center;white-space:nowrap"><span style="display:inline-flex;align-items:center;line-height:1;margin-right:3.5px;position:relative;top:0.6px;"><svg width="5.5" height="5.5" viewBox="0 0 6 6" style="display:block;overflow:visible"><path d="M1 1 L4.6 4.6" stroke="#616161" stroke-width="1.5" fill="none" stroke-linecap="round"/><path d="M5.5 1.7 V5.5 H1.7 Z" fill="#616161" stroke="#616161" stroke-width="0.6" stroke-linejoin="round"/></svg></span><span style="display:inline-flex;align-items:center;line-height:1;font-size:10.3px;font-weight:400;color:#616161;-webkit-text-stroke:0.3px #616161;letter-spacing:0.2px;position:relative;top:0.6px;">12%</span></div>
<div class="abs" style="left:1364.5px;top:301.72px;width:515.5px;height:33.5px;background:#f7f7f7;border-radius:8px;box-shadow:inset 0 -1px 0 rgba(0,0,0,.035)"></div>
<div class="t " style="top:311.52px;font-size:12.2px;line-height:14.64px;font-weight:400;color:#4a5b97;left:1375.2px;">Discounts</div>
<div class="t " style="top:311.34px;font-size:12.5px;line-height:15.0px;font-weight:400;color:#303030;right:92.79999999999995px;">-$146.00</div>
<div class="abs" style="left:1826px;width:50px;top:308.7px;height:20px;display:flex;align-items:center;justify-content:center;white-space:nowrap"><span style="display:inline-flex;align-items:center;line-height:1;margin-right:3.5px;position:relative;top:0.6px;"><svg width="5.5" height="5.5" viewBox="0 0 6 6" style="display:block;overflow:visible"><path d="M1 5 L4.6 1.4" stroke="#0c8a55" stroke-width="1.5" fill="none" stroke-linecap="round"/><path d="M1.7 0.5 H5.5 V4.3 Z" fill="#0c8a55" stroke="#0c8a55" stroke-width="0.6" stroke-linejoin="round"/></svg></span><span style="display:inline-flex;align-items:center;line-height:1;font-size:10.3px;font-weight:400;color:#0c8a55;-webkit-text-stroke:0.3px #0c8a55;letter-spacing:0.2px;position:relative;top:0.6px;">50%</span></div>
<div class="abs" style="left:1364.5px;top:339.14px;width:515.5px;height:33.5px;background:#f7f7f7;border-radius:8px;box-shadow:inset 0 -1px 0 rgba(0,0,0,.035)"></div>
<div class="t " style="top:349.02px;font-size:12.2px;line-height:14.64px;font-weight:400;color:#4a5b97;left:1375.2px;">Returns</div>
<div class="t " style="top:348.84px;font-size:12.5px;line-height:15.0px;font-weight:400;color:#303030;right:92.79999999999995px;">$0.00</div>
<div class="abs" style="left:1826px;width:50px;top:346.2px;height:20px;display:flex;align-items:center;justify-content:center;white-space:nowrap"><span style="display:inline-flex;align-items:center;line-height:1;margin-right:3.5px;position:relative;top:0.6px;"><svg width="5.5" height="5.5" viewBox="0 0 6 6" style="display:block;overflow:visible"><path d="M1 1 L4.6 4.6" stroke="#0c8a55" stroke-width="1.5" fill="none" stroke-linecap="round"/><path d="M5.5 1.7 V5.5 H1.7 Z" fill="#0c8a55" stroke="#0c8a55" stroke-width="0.6" stroke-linejoin="round"/></svg></span><span style="display:inline-flex;align-items:center;line-height:1;font-size:10.3px;font-weight:400;color:#0c8a55;-webkit-text-stroke:0.3px #0c8a55;letter-spacing:0.2px;position:relative;top:0.6px;">100%</span></div>
<div class="abs" style="left:1364.5px;top:376.56px;width:515.5px;height:33.5px;background:#f7f7f7;border-radius:8px;box-shadow:inset 0 -1px 0 rgba(0,0,0,.035)"></div>
<div class="t " style="top:386.52px;font-size:12.2px;line-height:14.64px;font-weight:400;color:#4a5b97;left:1375.2px;">Net sales</div>
<div class="t " style="top:386.34px;font-size:12.5px;line-height:15.0px;font-weight:400;color:#303030;right:92.79999999999995px;">$9,813.00</div>
<div class="abs" style="left:1826px;width:50px;top:383.7px;height:20px;display:flex;align-items:center;justify-content:center;white-space:nowrap"><span style="display:inline-flex;align-items:center;line-height:1;margin-right:3.5px;position:relative;top:0.6px;"><svg width="5.5" height="5.5" viewBox="0 0 6 6" style="display:block;overflow:visible"><path d="M1 1 L4.6 4.6" stroke="#616161" stroke-width="1.5" fill="none" stroke-linecap="round"/><path d="M5.5 1.7 V5.5 H1.7 Z" fill="#616161" stroke="#616161" stroke-width="0.6" stroke-linejoin="round"/></svg></span><span style="display:inline-flex;align-items:center;line-height:1;font-size:10.3px;font-weight:400;color:#616161;-webkit-text-stroke:0.3px #616161;letter-spacing:0.2px;position:relative;top:0.6px;">9%</span></div>
<div class="abs" style="left:1364.5px;top:413.98px;width:515.5px;height:33.5px;background:#f7f7f7;border-radius:8px;box-shadow:inset 0 -1px 0 rgba(0,0,0,.035)"></div>
<div class="t " style="top:424.02px;font-size:12.2px;line-height:14.64px;font-weight:400;color:#4a5b97;left:1375.2px;">Shipping charges</div>
<div class="t " style="top:423.84px;font-size:12.5px;line-height:15.0px;font-weight:400;color:#303030;right:92.79999999999995px;">$213.10</div>
<div class="abs" style="left:1826px;width:50px;top:421.2px;height:20px;display:flex;align-items:center;justify-content:center;white-space:nowrap"><span style="display:inline-flex;align-items:center;line-height:1;margin-right:3.5px;position:relative;top:0.6px;"><svg width="5.5" height="5.5" viewBox="0 0 6 6" style="display:block;overflow:visible"><path d="M1 5 L4.6 1.4" stroke="#0c8a55" stroke-width="1.5" fill="none" stroke-linecap="round"/><path d="M1.7 0.5 H5.5 V4.3 Z" fill="#0c8a55" stroke="#0c8a55" stroke-width="0.6" stroke-linejoin="round"/></svg></span><span style="display:inline-flex;align-items:center;line-height:1;font-size:10.3px;font-weight:400;color:#0c8a55;-webkit-text-stroke:0.3px #0c8a55;letter-spacing:0.2px;position:relative;top:0.6px;">10%</span></div>
<div class="abs" style="left:1364.5px;top:451.40000000000003px;width:515.5px;height:33.5px;background:#f7f7f7;border-radius:8px;box-shadow:inset 0 -1px 0 rgba(0,0,0,.035)"></div>
<div class="t " style="top:461.52px;font-size:12.2px;line-height:14.64px;font-weight:400;color:#4a5b97;left:1375.2px;">Return fees</div>
<div class="t " style="top:461.34px;font-size:12.5px;line-height:15.0px;font-weight:400;color:#303030;right:92.79999999999995px;">$0.00</div>
<div class="abs" style="left:1847px;top:468.2px;width:11px;height:1.2px;background:#8a8a8a;border-radius:0px;"></div>
<div class="abs" style="left:1364.5px;top:488.82000000000005px;width:515.5px;height:33.5px;background:#f7f7f7;border-radius:8px;box-shadow:inset 0 -1px 0 rgba(0,0,0,.035)"></div>
<div class="t " style="top:499.02px;font-size:12.2px;line-height:14.64px;font-weight:400;color:#4a5b97;left:1375.2px;">Taxes</div>
<div class="t " style="top:498.84px;font-size:12.5px;line-height:15.0px;font-weight:400;color:#303030;right:92.79999999999995px;">$23.59</div>
<div class="abs" style="left:1826px;width:50px;top:496.20000000000005px;height:20px;display:flex;align-items:center;justify-content:center;white-space:nowrap"><span style="display:inline-flex;align-items:center;line-height:1;margin-right:3.5px;position:relative;top:0.6px;"><svg width="5.5" height="5.5" viewBox="0 0 6 6" style="display:block;overflow:visible"><path d="M1 5 L4.6 1.4" stroke="#8a8a8a" stroke-width="1.5" fill="none" stroke-linecap="round"/><path d="M1.7 0.5 H5.5 V4.3 Z" fill="#8a8a8a" stroke="#8a8a8a" stroke-width="0.6" stroke-linejoin="round"/></svg></span><span style="display:inline-flex;align-items:center;line-height:1;font-size:10.3px;font-weight:400;color:#8a8a8a;-webkit-text-stroke:0.3px #8a8a8a;letter-spacing:0.2px;position:relative;top:0.6px;">252%</span></div>
<div class="abs" style="left:1364.5px;top:526.24px;width:515.5px;height:33.5px;background:#f7f7f7;border-radius:8px;box-shadow:inset 0 -1px 0 rgba(0,0,0,.035)"></div>
<div class="t " style="top:536.52px;font-size:12.2px;line-height:14.64px;font-weight:400;color:#4a5b97;left:1375.2px;">Total sales</div>
<div class="t " style="top:536.34px;font-size:12.5px;line-height:15.0px;font-weight:400;color:#303030;right:92.79999999999995px;">$10,049.69</div>
<div class="abs" style="left:1826px;width:50px;top:533.6999999999999px;height:20px;display:flex;align-items:center;justify-content:center;white-space:nowrap"><span style="display:inline-flex;align-items:center;line-height:1;margin-right:3.5px;position:relative;top:0.6px;"><svg width="5.5" height="5.5" viewBox="0 0 6 6" style="display:block;overflow:visible"><path d="M1 1 L4.6 4.6" stroke="#616161" stroke-width="1.5" fill="none" stroke-linecap="round"/><path d="M5.5 1.7 V5.5 H1.7 Z" fill="#616161" stroke="#616161" stroke-width="0.6" stroke-linejoin="round"/></svg></span><span style="display:inline-flex;align-items:center;line-height:1;font-size:10.3px;font-weight:400;color:#616161;-webkit-text-stroke:0.3px #616161;letter-spacing:0.2px;position:relative;top:0.6px;">9%</span></div>
<div class="card" style="left:230px;top:588px;width:546px;height:230px"></div>
<div class="t " style="top:604.61px;font-size:11.7px;line-height:14.04px;font-weight:400;color:#303030;-webkit-text-stroke:0.35px #303030;letter-spacing:0.4px;left:245px;border-bottom:1px dotted #d6d6d6;letter-spacing:0.45px;-webkit-text-stroke:0.28px #303030;">Total sales by sales channel</div>
<svg class="abs" style="left:0;top:0" width="1919" height="950"><path d="M399.98 637.43 A77.9 77.9 0 1 1 377.11 640.20 L380.83 653.69 A63.9 63.9 0 1 0 399.58 651.42 Z" fill="#38a5e9" stroke="#38a5e9" stroke-width="1.4" stroke-linejoin="round"/><path d="M381.47 639.13 A77.9 77.9 0 0 1 396.03 637.42 L396.35 651.42 A63.9 63.9 0 0 0 384.41 652.82 Z" fill="#7a27e2" stroke="#7a27e2" stroke-width="1.4" stroke-linejoin="round"/></svg>
<div class="t " style="top:698.10px;font-size:17.5px;line-height:21.0px;font-weight:400;color:#303030;left:398.2px;transform:translateX(-50%);-webkit-text-stroke:0.3px #303030">$10T</div>
<div class="abs" style="left:386px;top:716.5px;height:20px;display:flex;align-items:center;white-space:nowrap"><span style="display:inline-flex;align-items:center;line-height:1;margin-right:3px;position:relative;top:0px;"><svg width="5.5" height="5.5" viewBox="0 0 6 6" style="display:block;overflow:visible"><path d="M1 1 L4.6 4.6" stroke="#616161" stroke-width="1.5" fill="none" stroke-linecap="round"/><path d="M5.5 1.7 V5.5 H1.7 Z" fill="#616161" stroke="#616161" stroke-width="0.6" stroke-linejoin="round"/></svg></span><span style="display:inline-flex;align-items:center;line-height:1;font-size:9.5px;font-weight:400;color:#616161;-webkit-text-stroke:0.3px #616161;letter-spacing:0.2px;position:relative;top:0px;">9%</span></div>
<div class="abs" style="left:504.3px;top:685.0px;width:10.5px;height:10.5px;background:#38a5e9;border-radius:2px;"></div>
<div class="t " style="top:683.71px;font-size:11.2px;line-height:13.44px;font-weight:400;color:#616161;left:518.3px;">Online Store</div>
<div class="t " style="top:683.53px;font-size:11.5px;line-height:13.8px;font-weight:400;color:#616161;right:1264.3px;">$9.7T</div>
<div class="abs" style="left:659px;top:680.6999999999999px;height:20px;display:flex;align-items:center;white-space:nowrap"><span style="display:inline-flex;align-items:center;line-height:1;margin-right:2px;position:relative;top:0px;"><svg width="6.5" height="6.5" viewBox="0 0 6 6" style="display:block;overflow:visible"><path d="M1 1 L4.6 4.6" stroke="#616161" stroke-width="1.5" fill="none" stroke-linecap="round"/><path d="M5.5 1.7 V5.5 H1.7 Z" fill="#616161" stroke="#616161" stroke-width="0.6" stroke-linejoin="round"/></svg></span><span style="display:inline-flex;align-items:center;line-height:1;font-size:9.5px;font-weight:400;color:#616161;-webkit-text-stroke:0.3px #616161;letter-spacing:0.2px;position:relative;top:0px;">11%</span></div>
<div class="abs" style="left:504.3px;top:709.8000000000001px;width:10.5px;height:10.5px;background:#7a27e2;border-radius:2px;"></div>
<div class="t " style="top:708.51px;font-size:11.2px;line-height:13.44px;font-weight:400;color:#616161;left:518.3px;">Shop</div>
<div class="t " style="top:708.33px;font-size:11.5px;line-height:13.8px;font-weight:400;color:#616161;right:1264.3px;">$367.49</div>
<div class="abs" style="left:659px;top:705.5px;height:20px;display:flex;align-items:center;white-space:nowrap"><span style="display:inline-flex;align-items:center;line-height:1;margin-right:2px;position:relative;top:0px;"><svg width="6.5" height="6.5" viewBox="0 0 6 6" style="display:block;overflow:visible"><path d="M1 5 L4.6 1.4" stroke="#0c8a55" stroke-width="1.5" fill="none" stroke-linecap="round"/><path d="M1.7 0.5 H5.5 V4.3 Z" fill="#0c8a55" stroke="#0c8a55" stroke-width="0.6" stroke-linejoin="round"/></svg></span><span style="display:inline-flex;align-items:center;line-height:1;font-size:9px;font-weight:400;color:#0c8a55;-webkit-text-stroke:0.3px #0c8a55;letter-spacing:0.2px;position:relative;top:0px;">149%</span></div>
<div class="abs" style="left:504.3px;top:735.3000000000001px;width:10.5px;height:10.5px;background:#6e7ce6;border-radius:2px;"></div>
<div class="t " style="top:734.01px;font-size:11.2px;line-height:13.44px;font-weight:400;color:#616161;left:518.3px;">Draft Orders</div>
<div class="t " style="top:733.83px;font-size:11.5px;line-height:13.8px;font-weight:400;color:#616161;right:1264.3px;">$0</div>
<div class="abs" style="left:659.8px;top:740.2px;width:10px;height:1.2px;background:#8a8a8a;border-radius:0px;"></div>
<div class="card" style="left:790px;top:588px;width:546px;height:230px"></div>
<div class="t " style="top:604.61px;font-size:11.7px;line-height:14.04px;font-weight:400;color:#303030;-webkit-text-stroke:0.35px #303030;letter-spacing:0.4px;left:805px;border-bottom:1px dotted #d6d6d6;letter-spacing:0.45px;-webkit-text-stroke:0.28px #303030;">Average order value over time</div>
<div class="abs" style="left:805px;top:629.3px;height:20px;display:flex;align-items:center;white-space:nowrap"><span style="display:inline-flex;align-items:center;line-height:1;font-size:17.6px;font-weight:400;color:#303030;-webkit-text-stroke:0.4px #303030;margin-right:8px;">$99.12</span><span style="display:inline-flex;align-items:center;line-height:1;margin-right:2.5px;position:relative;top:2px;"><svg width="5" height="5" viewBox="0 0 6 6" style="display:block;overflow:visible"><path d="M1 1 L4.6 4.6" stroke="#616161" stroke-width="1.5" fill="none" stroke-linecap="round"/><path d="M5.5 1.7 V5.5 H1.7 Z" fill="#616161" stroke="#616161" stroke-width="0.6" stroke-linejoin="round"/></svg></span><span style="display:inline-flex;align-items:center;line-height:1;font-size:10px;font-weight:400;color:#616161;-webkit-text-stroke:0.3px #616161;letter-spacing:0.2px;position:relative;top:2px;">2%</span></div>
<div class="t " style="top:662.51px;font-size:10px;line-height:12.0px;font-weight:400;color:#616161;left:806.9px;">$200</div>
<div class="t " style="top:733.72px;font-size:10px;line-height:12.0px;font-weight:400;color:#616161;left:806.9px;">$0</div>
<svg class="abs" style="left:0;top:0;pointer-events:none" width="1919" height="950"><line x1="852.1" y1="668.4" x2="1317.5" y2="668.4" stroke="#f0f0f0" stroke-width="1"/><line x1="852.1" y1="739.9" x2="1317.5" y2="739.9" stroke="#f0f0f0" stroke-width="1"/><defs><linearGradient id="g852668" x1="0" y1="0" x2="0" y2="1"><stop offset="0" stop-color="#d3eafa" stop-opacity=".38"/><stop offset="1" stop-color="#e8f4fc" stop-opacity=".05"/></linearGradient></defs><path d="M852.10 714.80 C860.12 714.80 860.12 706.00 868.15 706.00 C876.17 706.00 876.17 723.00 884.20 723.00 C892.22 723.00 892.22 704.90 900.24 704.90 C908.27 704.90 908.27 699.00 916.29 699.00 C924.32 699.00 924.32 705.50 932.34 705.50 C940.37 705.50 940.37 723.00 948.39 723.00 C956.41 723.00 956.41 702.60 964.44 702.60 C972.46 702.60 972.46 712.80 980.49 712.80 C988.51 712.80 988.51 706.00 996.53 706.00 C1004.56 706.00 1004.56 723.00 1012.58 723.00 C1020.61 723.00 1020.61 702.00 1028.63 702.00 C1036.66 702.00 1036.66 707.00 1044.68 707.00 C1052.70 707.00 1052.70 723.00 1060.73 723.00 C1068.75 723.00 1068.75 701.00 1076.78 701.00 C1084.80 701.00 1084.80 704.90 1092.82 704.90 C1100.85 704.90 1100.85 681.50 1108.87 681.50 C1116.90 681.50 1116.90 705.50 1124.92 705.50 C1132.94 705.50 1132.94 709.90 1140.97 709.90 C1148.99 709.90 1148.99 695.30 1157.02 695.30 C1165.04 695.30 1165.04 714.20 1173.07 714.20 C1181.09 714.20 1181.09 714.80 1189.11 714.80 C1197.14 714.80 1197.14 708.40 1205.16 708.40 C1213.19 708.40 1213.19 705.50 1221.21 705.50 C1229.23 705.50 1229.23 708.40 1237.26 708.40 C1245.28 708.40 1245.28 672.80 1253.31 672.80 C1261.33 672.80 1261.33 739.90 1269.36 739.90 C1277.38 739.90 1277.38 714.80 1285.40 714.80 C1293.43 714.80 1293.43 706.00 1301.45 706.00 C1309.48 706.00 1309.48 717.70 1317.50 717.70 L1317.5 739.9 L852.1 739.9 Z" fill="url(#g852668)"/><path d="M852.10 704.90 C860.12 704.90 860.12 705.50 868.15 705.50 C876.17 705.50 876.17 711.30 884.20 711.30 C892.22 711.30 892.22 697.30 900.24 697.30 C908.27 697.30 908.27 707.00 916.29 707.00 C924.32 707.00 924.32 670.50 932.34 670.50 C940.37 670.50 940.37 688.00 948.39 688.00 C956.41 688.00 956.41 723.00 964.44 723.00 C972.46 723.00 972.46 711.90 980.49 711.90 C988.51 711.90 988.51 690.30 996.53 690.30 C1004.56 690.30 1004.56 705.50 1012.58 705.50 C1020.61 705.50 1020.61 708.40 1028.63 708.40 C1036.66 708.40 1036.66 716.60 1044.68 716.60 C1052.70 716.60 1052.70 709.90 1060.73 709.90 C1068.75 709.90 1068.75 710.70 1076.78 710.70 C1084.80 710.70 1084.80 723.00 1092.82 723.00 C1100.85 723.00 1100.85 705.50 1108.87 705.50 C1116.90 705.50 1116.90 702.60 1124.92 702.60 C1132.94 702.60 1132.94 705.50 1140.97 705.50 C1148.99 705.50 1148.99 731.20 1157.02 731.20 C1165.04 731.20 1165.04 696.70 1173.07 696.70 C1181.09 696.70 1181.09 669.90 1189.11 669.90 C1197.14 669.90 1197.14 710.70 1205.16 710.70 C1213.19 710.70 1213.19 710.70 1221.21 710.70 C1229.23 710.70 1229.23 692.30 1237.26 692.30 C1245.28 692.30 1245.28 706.00 1253.31 706.00 C1261.33 706.00 1261.33 699.60 1269.36 699.60 C1277.38 699.60 1277.38 716.60 1285.40 716.60 C1293.43 716.60 1293.43 688.00 1301.45 688.00" stroke="#98aeba" stroke-width="1.7" stroke-dasharray="0.1 3.6" stroke-linecap="round" fill="none"/><path d="M852.10 714.80 C860.12 714.80 860.12 706.00 868.15 706.00 C876.17 706.00 876.17 723.00 884.20 723.00 C892.22 723.00 892.22 704.90 900.24 704.90 C908.27 704.90 908.27 699.00 916.29 699.00 C924.32 699.00 924.32 705.50 932.34 705.50 C940.37 705.50 940.37 723.00 948.39 723.00 C956.41 723.00 956.41 702.60 964.44 702.60 C972.46 702.60 972.46 712.80 980.49 712.80 C988.51 712.80 988.51 706.00 996.53 706.00 C1004.56 706.00 1004.56 723.00 1012.58 723.00 C1020.61 723.00 1020.61 702.00 1028.63 702.00 C1036.66 702.00 1036.66 707.00 1044.68 707.00 C1052.70 707.00 1052.70 723.00 1060.73 723.00 C1068.75 723.00 1068.75 701.00 1076.78 701.00 C1084.80 701.00 1084.80 704.90 1092.82 704.90 C1100.85 704.90 1100.85 681.50 1108.87 681.50 C1116.90 681.50 1116.90 705.50 1124.92 705.50 C1132.94 705.50 1132.94 709.90 1140.97 709.90 C1148.99 709.90 1148.99 695.30 1157.02 695.30 C1165.04 695.30 1165.04 714.20 1173.07 714.20 C1181.09 714.20 1181.09 714.80 1189.11 714.80 C1197.14 714.80 1197.14 708.40 1205.16 708.40 C1213.19 708.40 1213.19 705.50 1221.21 705.50 C1229.23 705.50 1229.23 708.40 1237.26 708.40 C1245.28 708.40 1245.28 672.80 1253.31 672.80 C1261.33 672.80 1261.33 739.90 1269.36 739.90 C1277.38 739.90 1277.38 714.80 1285.40 714.80 C1293.43 714.80 1293.43 706.00 1301.45 706.00 C1309.48 706.00 1309.48 717.70 1317.50 717.70" stroke="#3d95c9" stroke-width="1.85" fill="none"/></svg>
<div class="t " style="top:752.72px;font-size:10px;line-height:12.0px;font-weight:400;color:#616161;left:852.1px;transform:translateX(-50%);">12 Apr</div>
<div class="t " style="top:752.72px;font-size:10px;line-height:12.0px;font-weight:400;color:#616161;left:916.2931034482759px;transform:translateX(-50%);">16 Apr</div>
<div class="t " style="top:752.72px;font-size:10px;line-height:12.0px;font-weight:400;color:#616161;left:980.4862068965517px;transform:translateX(-50%);">20 Apr</div>
<div class="t " style="top:752.72px;font-size:10px;line-height:12.0px;font-weight:400;color:#616161;left:1044.6793103448276px;transform:translateX(-50%);">24 Apr</div>
<div class="t " style="top:752.72px;font-size:10px;line-height:12.0px;font-weight:400;color:#616161;left:1108.8724137931035px;transform:translateX(-50%);">28 Apr</div>
<div class="t " style="top:752.72px;font-size:10px;line-height:12.0px;font-weight:400;color:#616161;left:1173.0655172413794px;transform:translateX(-50%);">2 May</div>
<div class="t " style="top:752.72px;font-size:10px;line-height:12.0px;font-weight:400;color:#616161;left:1237.2586206896551px;transform:translateX(-50%);">6 May</div>
<div class="t " style="top:752.72px;font-size:10px;line-height:12.0px;font-weight:400;color:#616161;left:1301.451724137931px;transform:translateX(-50%);">10 May</div>
<svg class="abs" style="left:943px;top:790px;" width="13" height="6" viewBox="0 0 13 6"><line x1="1" y1="3" x2="12" y2="3" stroke="#4aa0d6" stroke-width="1.6" stroke-linecap="round"/></svg>
<div class="t " style="top:787.72px;font-size:10px;line-height:12.0px;font-weight:400;color:#616161;left:960px;">12 Apr–11 May 2025</div>
<svg class="abs" style="left:1067px;top:790px;" width="13" height="6" viewBox="0 0 13 6"><line x1="1" y1="3" x2="12" y2="3" stroke="#8ea8b5" stroke-width="1.75" stroke-dasharray="0.1 3.5" stroke-linecap="round"/></svg>
<div class="t " style="top:787.72px;font-size:10px;line-height:12.0px;font-weight:400;color:#616161;left:1084.7px;">13 Mar–11 Apr 2025</div>
<div class="card" style="left:1350px;top:588px;width:546px;height:230px"></div>
<div class="t " style="top:604.51px;font-size:11.7px;line-height:14.04px;font-weight:400;color:#303030;-webkit-text-stroke:0.35px #303030;letter-spacing:0.4px;left:1365px;border-bottom:1px dotted #d6d6d6;letter-spacing:0.45px;-webkit-text-stroke:0.28px #303030;">Total sales by product</div>
<div class="t " style="top:632.44px;font-size:10.3px;line-height:12.36px;font-weight:400;color:#616161;left:1364.4px;">CAMELNO Thong · Vivie Intimates · None</div>
<div class="abs" style="left:1364.9px;top:646.4px;width:317.1px;height:30px;background:#37a6ea;border-radius:0px;border-radius:0 3px 3px 0"></div>
<div class="t " style="top:655.94px;font-size:10.8px;line-height:12.96px;font-weight:400;color:#616161;left:1690.5px;">$5,365.30</div>
<div class="abs" style="left:1748.8px;top:652.5px;height:20px;display:flex;align-items:center;white-space:nowrap"><span style="display:inline-flex;align-items:center;line-height:1;margin-right:3px;position:relative;top:0px;"><svg width="7" height="7" viewBox="0 0 6 6" style="display:block;overflow:visible"><path d="M1 5 L4.6 1.4" stroke="#0c8a55" stroke-width="1.5" fill="none" stroke-linecap="round"/><path d="M1.7 0.5 H5.5 V4.3 Z" fill="#0c8a55" stroke="#0c8a55" stroke-width="0.6" stroke-linejoin="round"/></svg></span><span style="display:inline-flex;align-items:center;line-height:1;font-size:10px;font-weight:400;color:#0c8a55;-webkit-text-stroke:0.3px #0c8a55;letter-spacing:0.2px;position:relative;top:0px;">39%</span></div>
<div class="abs" style="left:1364.9px;top:678.7px;width:228px;height:29.5px;background:#93c9ea;border-radius:0px;border-radius:0 3px 3px 0"></div>
<div class="t " style="top:687.34px;font-size:10.8px;line-height:12.96px;font-weight:400;color:#616161;left:1601.7px;">$3,860.70</div>
<div class="t " style="top:726.94px;font-size:10.3px;line-height:12.36px;font-weight:400;color:#616161;left:1364.4px;">CAMELNO Thong [3-pack] · Vivie Intimates · None</div>
<div class="abs" style="left:1364.9px;top:741px;width:264.2px;height:30px;background:#37a6ea;border-radius:0px;border-radius:0 3px 3px 0"></div>
<div class="t " style="top:750.14px;font-size:10.8px;line-height:12.96px;font-weight:400;color:#616161;left:1638.1px;">$4,471.29</div>
<div class="abs" style="left:1694.4px;top:746.7px;height:20px;display:flex;align-items:center;white-space:nowrap"><span style="display:inline-flex;align-items:center;line-height:1;margin-right:3px;position:relative;top:0px;"><svg width="7" height="7" viewBox="0 0 6 6" style="display:block;overflow:visible"><path d="M1 1 L4.6 4.6" stroke="#4a4a4a" stroke-width="1.5" fill="none" stroke-linecap="round"/><path d="M5.5 1.7 V5.5 H1.7 Z" fill="#4a4a4a" stroke="#4a4a4a" stroke-width="0.6" stroke-linejoin="round"/></svg></span><span style="display:inline-flex;align-items:center;line-height:1;font-size:10px;font-weight:400;color:#4a4a4a;-webkit-text-stroke:0.3px #4a4a4a;letter-spacing:0.2px;position:relative;top:0px;">35%</span></div>
<div class="abs" style="left:1364.9px;top:773px;width:409.3px;height:30px;background:#93c9ea;border-radius:0px;border-radius:0 3px 3px 0"></div>
<div class="t " style="top:782.14px;font-size:10.8px;line-height:12.96px;font-weight:400;color:#616161;left:1783.2px;">$6,930.00</div>
<div class="card" style="left:230px;top:831px;width:546px;height:160px"></div>
<div class="t " style="top:848.11px;font-size:11.7px;line-height:14.04px;font-weight:400;color:#303030;-webkit-text-stroke:0.35px #303030;letter-spacing:0.4px;left:245px;border-bottom:1px dotted #d6d6d6;letter-spacing:0.45px;-webkit-text-stroke:0.28px #303030;">Sessions over time</div>
<div class="abs" style="left:245px;top:872.5px;height:20px;display:flex;align-items:center;white-space:nowrap"><span style="display:inline-flex;align-items:center;line-height:1;font-size:17.3px;font-weight:400;color:#303030;-webkit-text-stroke:0.4px #303030;margin-right:8px;">1,795</span><span style="display:inline-flex;align-items:center;line-height:1;margin-right:2px;position:relative;top:0.5px;"><svg width="5" height="5" viewBox="0 0 6 6" style="display:block;overflow:visible"><path d="M1 5 L4.6 1.4" stroke="#0c8a55" stroke-width="1.5" fill="none" stroke-linecap="round"/><path d="M1.7 0.5 H5.5 V4.3 Z" fill="#0c8a55" stroke="#0c8a55" stroke-width="0.6" stroke-linejoin="round"/></svg></span><span style="display:inline-flex;align-items:center;line-height:1;font-size:9.8px;font-weight:400;color:#0c8a55;-webkit-text-stroke:0.3px #0c8a55;letter-spacing:0.2px;position:relative;top:0.5px;">10%</span></div>
<div class="t " style="top:905.91px;font-size:10px;line-height:12.0px;font-weight:400;color:#616161;left:247.5px;">200</div>
<div class="t " style="top:944.32px;font-size:10px;line-height:12.0px;font-weight:400;color:#616161;left:247.5px;">150</div>
<svg class="abs" style="left:0;top:0" width="1919" height="950"><line x1="284.8" y1="911.9" x2="757.5" y2="911.9" stroke="#ebebeb"/><path d="M702 952 C704 940 706 935.5 708 935.5 C710 935.5 712 940 714 952" stroke="#3d95c9" stroke-width="2" fill="none"/></svg>
<div class="card" style="left:790px;top:831px;width:546px;height:160px"></div>
<div class="t " style="top:848.11px;font-size:11.7px;line-height:14.04px;font-weight:400;color:#303030;-webkit-text-stroke:0.35px #303030;letter-spacing:0.4px;left:805px;border-bottom:1px dotted #d6d6d6;letter-spacing:0.45px;-webkit-text-stroke:0.28px #303030;">Conversion rate over time</div>
<div class="abs" style="left:805px;top:872.5px;height:20px;display:flex;align-items:center;white-space:nowrap"><span style="display:inline-flex;align-items:center;line-height:1;font-size:17px;font-weight:400;color:#303030;-webkit-text-stroke:0.4px #303030;margin-right:9px;">5.18%</span><span style="display:inline-flex;align-items:center;line-height:1;margin-right:1.5px;position:relative;top:1px;"><svg width="5" height="5" viewBox="0 0 6 6" style="display:block;overflow:visible"><path d="M1 1 L4.6 4.6" stroke="#616161" stroke-width="1.5" fill="none" stroke-linecap="round"/><path d="M5.5 1.7 V5.5 H1.7 Z" fill="#616161" stroke="#616161" stroke-width="0.6" stroke-linejoin="round"/></svg></span><span style="display:inline-flex;align-items:center;line-height:1;font-size:10px;font-weight:400;color:#616161;-webkit-text-stroke:0.3px #616161;letter-spacing:0.2px;position:relative;top:1px;">17%</span></div>
<div class="t " style="top:905.91px;font-size:10px;line-height:12.0px;font-weight:400;color:#616161;left:806.9px;">20%</div>
<div class="t " style="top:944.32px;font-size:10px;line-height:12.0px;font-weight:400;color:#616161;left:806.9px;">15%</div>
<svg class="abs" style="left:0;top:0" width="1919" height="950"><line x1="847.7" y1="911.9" x2="1317.5" y2="911.9" stroke="#ebebeb"/></svg>
<div class="card" style="left:1350px;top:831px;width:546px;height:160px"></div>
<div class="t " style="top:848.11px;font-size:11.7px;line-height:14.04px;font-weight:400;color:#303030;-webkit-text-stroke:0.35px #303030;letter-spacing:0.4px;left:1365px;border-bottom:1px dotted #d6d6d6;letter-spacing:0.45px;-webkit-text-stroke:0.28px #303030;">Conversion rate breakdown</div>
<div class="abs" style="left:1365px;top:872.8px;height:20px;display:flex;align-items:center;white-space:nowrap"><span style="display:inline-flex;align-items:center;line-height:1;font-size:17px;font-weight:400;color:#303030;-webkit-text-stroke:0.4px #303030;margin-right:8px;">5.18%</span><span style="display:inline-flex;align-items:center;line-height:1;margin-right:2.5px;position:relative;top:0.5px;"><svg width="5" height="5" viewBox="0 0 6 6" style="display:block;overflow:visible"><path d="M1 1 L4.6 4.6" stroke="#616161" stroke-width="1.5" fill="none" stroke-linecap="round"/><path d="M5.5 1.7 V5.5 H1.7 Z" fill="#616161" stroke="#616161" stroke-width="0.6" stroke-linejoin="round"/></svg></span><span style="display:inline-flex;align-items:center;line-height:1;font-size:9.2px;font-weight:400;color:#616161;-webkit-text-stroke:0.3px #616161;letter-spacing:0.2px;position:relative;top:0.5px;">17%</span></div>
<svg class="abs" style="left:0;top:0" width="1919" height="950"><line x1="1500.5" y1="907" x2="1500.5" y2="950" stroke="#e3e3e3"/><line x1="1637.6" y1="907" x2="1637.6" y2="950" stroke="#e3e3e3"/><line x1="1774.6" y1="907" x2="1774.6" y2="950" stroke="#e3e3e3"/></svg>
<svg class="abs" style="left:1365px;top:913px;" width="14" height="14" viewBox="0 0 14 14"><circle cx="7" cy="7" r="6.5" fill="#f1f1f1"/><path d="M4 5.5 H10 M4 8.5 H10 M8 2.5 L5.5 11.5" stroke="#303030" stroke-width="1.2" stroke-linecap="round"/></svg>
<div class="t " style="top:914.35px;font-size:11.3px;line-height:13.56px;font-weight:400;color:#303030;left:1382.4px;">Sessions</div>
<div class="t " style="top:931.25px;font-size:13px;line-height:15.6px;font-weight:400;color:#303030;left:1365px;-webkit-text-stroke:0.45px #303030">100%</div>
<div class="t " style="top:932.13px;font-size:11.5px;line-height:13.8px;font-weight:400;color:#616161;left:1404.2px;">1,795</div>
<div class="t " style="top:914.23px;font-size:11.5px;line-height:13.8px;font-weight:400;color:#303030;left:1511px;">Added to cart</div>
<div class="t " style="top:931.25px;font-size:13px;line-height:15.6px;font-weight:400;color:#303030;left:1511px;-webkit-text-stroke:0.45px #303030">8.91%</div>
<div class="t " style="top:932.13px;font-size:11.5px;line-height:13.8px;font-weight:400;color:#616161;left:1554.4px;">160</div>
<div class="t " style="top:914.23px;font-size:11.5px;line-height:13.8px;font-weight:400;color:#303030;left:1648px;">Reached checkout</div>
<div class="t " style="top:931.25px;font-size:13px;line-height:15.6px;font-weight:400;color:#303030;left:1648px;-webkit-text-stroke:0.45px #303030">6.41%</div>
<div class="t " style="top:932.13px;font-size:11.5px;line-height:13.8px;font-weight:400;color:#616161;left:1691px;">115</div>
<div class="t " style="top:914.23px;font-size:11.5px;line-height:13.8px;font-weight:400;color:#303030;left:1784.7px;">Completed che...</div>
<div class="t " style="top:931.25px;font-size:13px;line-height:15.6px;font-weight:400;color:#303030;left:1784.7px;-webkit-text-stroke:0.45px #303030">5.18%</div>
<div class="t " style="top:932.13px;font-size:11.5px;line-height:13.8px;font-weight:400;color:#616161;left:1828.1px;">93</div>
<div class="abs" style="left:1912px;top:65px;width:5px;height:282px;background:#b4b4b4;border-radius:3px;"></div>
<svg class="abs" style="left:1912px;top:55.5px;" width="6" height="5" viewBox="0 0 6 5"><path d="M0.2 4.6 L3 0.8 L5.8 4.6 Z" fill="#a9a9a9"/></svg>
<svg class="abs" style="left:1912px;top:940px;" width="6" height="6" viewBox="0 0 6 6"><path d="M0.2 0.4 L3 5 L5.8 0.4 Z" fill="#a9a9a9"/></svg>
<div class="abs" style="left:0px;top:948px;width:1919px;height:1px;background:#b7bfc8;border-radius:0px;"></div>
<div class="abs" style="left:0px;top:949px;width:1919px;height:1px;background:#e6ecf3;border-radius:0px;"></div>
</body></html>
